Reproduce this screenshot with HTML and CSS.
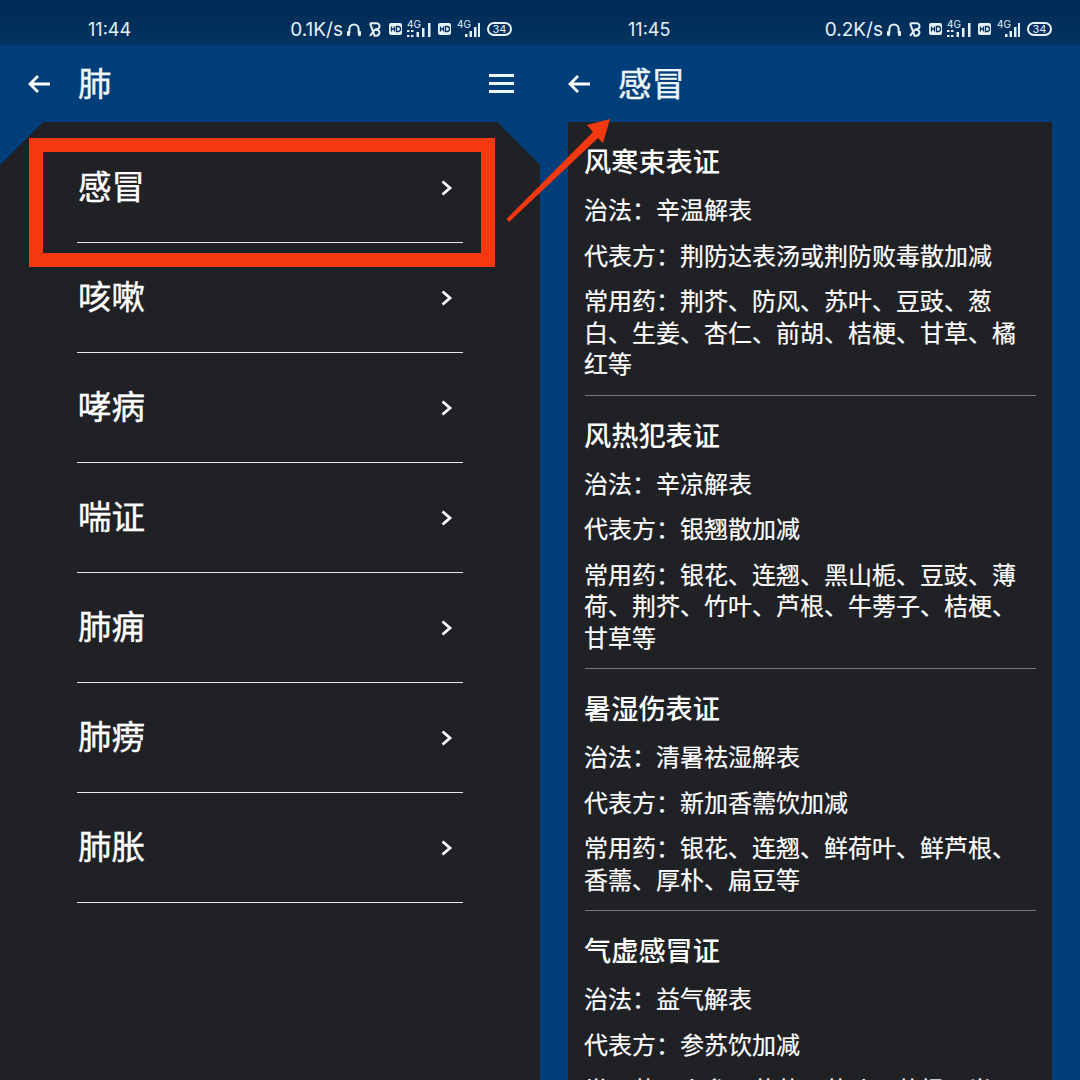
FILE: index.html
```html
<!DOCTYPE html>
<html lang="zh">
<head>
  <meta charset="UTF-8" />
  <title>感冒</title>
  <link rel="stylesheet" href="styles.css">
</head>
<body>
  <svg width="0" height="0" class="defs">
    <symbol id="headphone" viewBox="0 0 14 14">
      <path d="M2.400 11V7a4.600 4.600 0 0 1 9.200 0v4" fill="none" stroke="currentColor" stroke-width="2"/>
      <rect x="0" y="9" width="3" height="5" rx="1" fill="currentColor"/>
      <rect x="11" y="9" width="3" height="5" rx="1" fill="currentColor"/>
    </symbol>
    <symbol id="bluetooth" viewBox="0 0 12 15">
      <path d="M1 1.200h6.500a3 3 0 0 1 1.500 5.600L6 7.500l3.200.800a3 3 0 0 1-1.700 5.400H5.500L1 1.200M1 13.800l5-6.300" fill="none" stroke="currentColor" stroke-width="2"/>
    </symbol>
    <symbol id="hd" viewBox="0 0 13 12">
      <rect width="13" height="12" rx="2" fill="currentColor"/>
      <path d="M2.500 3.500v5M5.500 3.500v5M2.500 6h3M7.500 3.500v5h1.500a2.500 2.500 0 0 0 0-5z" fill="none" stroke="#02305f" stroke-width="1.300"/>
    </symbol>
    <symbol id="signal-a" viewBox="0 0 25 16">
      <rect x="0" y="7" width="2.500" height="2" fill="currentColor"/>
      <rect x="4" y="7" width="2.500" height="2" fill="currentColor"/>
      <rect x="0" y="12" width="2.500" height="2" fill="currentColor"/>
      <rect x="4" y="12" width="2.500" height="2" fill="currentColor"/>
      <rect x="9.500" y="9" width="2.500" height="5" fill="currentColor"/>
      <rect x="15" y="5" width="2.500" height="9" fill="currentColor"/>
      <rect x="21" y="0" width="2.500" height="14" fill="currentColor"/>
    </symbol>
    <symbol id="signal-b" viewBox="0 0 25 16">
      <rect x="10" y="11" width="2.500" height="3" fill="currentColor"/>
      <rect x="14.500" y="8" width="2.500" height="6" fill="currentColor"/>
      <rect x="19" y="4" width="2.500" height="10" fill="currentColor"/>
      <rect x="23" y="0" width="2" height="14" fill="currentColor"/>
    </symbol>
    <symbol id="chevron" viewBox="0 0 12 16">
      <path d="M1.500 1.500l7.500 6.500-7.500 6.500" fill="none" stroke="currentColor" stroke-width="2.800"/>
    </symbol>
    <symbol id="back" viewBox="0 0 24 20">
      <path d="M23 10H3M11 2l-8 8 8 8" fill="none" stroke="currentColor" stroke-width="2.800"/>
    </symbol>
  </svg>

  <div class="phones">
    <section class="phone">
      <div class="statusbar">
        <span class="clock">11:44</span>
        <div class="status-right">
          <span class="speed">0.1K/s</span>
          <svg class="ic-head"><use href="#headphone"/></svg>
          <svg class="ic-bt"><use href="#bluetooth"/></svg>
          <svg class="ic-hd"><use href="#hd"/></svg>
          <div class="net"><span class="net-label">4G</span><svg class="ic-signal"><use href="#signal-a"/></svg></div>
          <svg class="ic-hd ic-hd-b"><use href="#hd"/></svg>
          <div class="net net-b"><span class="net-label">4G</span><svg class="ic-signal"><use href="#signal-b"/></svg></div>
          <span class="battery">34</span>
        </div>
      </div>
      <header class="appbar">
        <svg class="ic-back"><use href="#back"/></svg>
        <div class="title">肺</div>
        <div class="hamburger"><span></span><span></span><span></span></div>
      </header>
      <div class="list-card">
        <a class="item"><span class="item-name">感冒</span><svg class="ic-chevron"><use href="#chevron"/></svg></a>
        <a class="item"><span class="item-name">咳嗽</span><svg class="ic-chevron"><use href="#chevron"/></svg></a>
        <a class="item"><span class="item-name">哮病</span><svg class="ic-chevron"><use href="#chevron"/></svg></a>
        <a class="item"><span class="item-name">喘证</span><svg class="ic-chevron"><use href="#chevron"/></svg></a>
        <a class="item"><span class="item-name">肺痈</span><svg class="ic-chevron"><use href="#chevron"/></svg></a>
        <a class="item"><span class="item-name">肺痨</span><svg class="ic-chevron"><use href="#chevron"/></svg></a>
        <a class="item"><span class="item-name">肺胀</span><svg class="ic-chevron"><use href="#chevron"/></svg></a>
      </div>
    </section>

    <section class="phone">
      <div class="statusbar">
        <span class="clock">11:45</span>
        <div class="status-right">
          <span class="speed">0.2K/s</span>
          <svg class="ic-head"><use href="#headphone"/></svg>
          <svg class="ic-bt"><use href="#bluetooth"/></svg>
          <svg class="ic-hd"><use href="#hd"/></svg>
          <div class="net"><span class="net-label">4G</span><svg class="ic-signal"><use href="#signal-a"/></svg></div>
          <svg class="ic-hd ic-hd-b"><use href="#hd"/></svg>
          <div class="net net-b"><span class="net-label">4G</span><svg class="ic-signal"><use href="#signal-b"/></svg></div>
          <span class="battery">34</span>
        </div>
      </div>
      <header class="appbar">
        <svg class="ic-back"><use href="#back"/></svg>
        <div class="title">感冒</div>
      </header>
      <div class="detail-card">
        <article class="syndrome">
          <h3>风寒束表证</h3>
          <p>治法&#xFF1A;辛温解表</p>
          <p>代表方&#xFF1A;荆防达表汤或荆防败毒散加减</p>
          <p>常用药&#xFF1A;荆芥、防风、苏叶、豆豉、葱白、生姜、杏仁、前胡、桔梗、甘草、橘红等</p>
        </article>
        <article class="syndrome">
          <h3>风热犯表证</h3>
          <p>治法&#xFF1A;辛凉解表</p>
          <p>代表方&#xFF1A;银翘散加减</p>
          <p>常用药&#xFF1A;银花、连翘、黑山栀、豆豉、薄荷、荆芥、竹叶、芦根、牛蒡子、桔梗、甘草等</p>
        </article>
        <article class="syndrome">
          <h3>暑湿伤表证</h3>
          <p>治法&#xFF1A;清暑祛湿解表</p>
          <p>代表方&#xFF1A;新加香薷饮加减</p>
          <p>常用药&#xFF1A;银花、连翘、鲜荷叶、鲜芦根、香薷、厚朴、扁豆等</p>
        </article>
        <article class="syndrome">
          <h3>气虚感冒证</h3>
          <p>治法&#xFF1A;益气解表</p>
          <p>代表方&#xFF1A;参苏饮加减</p>
          <p>常用药&#xFF1A;人参、茯苓、苏叶、葛根、半夏、前胡、陈皮、甘草等</p>
        </article>
      </div>
    </section>
  </div>

  <!-- red annotation drawn over the screenshots -->
  <div class="highlight"></div>
  <svg class="arrow" width="110" height="110" viewBox="0 0 110 110">
    <polygon points="104,2 81,8 87,15 0.500,102 3,105 92,21 97,26" fill="#f4380f"/>
  </svg>
</body>
</html>
```

FILE: styles.css
```css
:root {
  --blue: #003e7a;
  --status: #02305f;
  --dark: #202125;
  --text: #ffffff;
  --red: #f4380f;
}

html, body {
  margin: 0;
  height: 1080px;
  overflow: hidden;
}

body {
  position: relative;
  width: 1080px;
  background: var(--blue);
  color: var(--text);
  font-family: "Noto Sans CJK SC", "Noto Sans", sans-serif;
}

.defs {
  position: absolute;
}

.phones {
  display: flex;
  height: 1080px;
}

.phone {
  width: 540px;
  height: 1080px;
  overflow: hidden;
  display: flex;
  flex-direction: column;
}

/* status bar */
.statusbar {
  flex: none;
  height: 45px;
  box-sizing: border-box;
  padding: 13px 28px 0 88px;
  display: flex;
  justify-content: space-between;
  align-items: center;
  background: linear-gradient(180deg, #012a56, #02335f);
  color: #e6f1f8;
  font-family: Inter, Roboto, sans-serif;
}

.clock {
  font-size: 18px;
}

.status-right {
  display: flex;
  align-items: center;
}

.speed {
  font-size: 19px;
  margin-right: 4px;
}

.ic-head {
  width: 14px;
  height: 14px;
  margin-right: 8px;
}

.ic-bt {
  width: 12px;
  height: 15px;
  margin-right: 8px;
}

.ic-hd {
  width: 13px;
  height: 12px;
  margin-right: 5px;
}

.ic-hd-b {
  margin-right: 4px;
}

.net {
  position: relative;
  width: 25px;
  height: 18px;
  margin-right: 6px;
}

.net-b {
  margin-right: 7px;
}

.net-label {
  position: absolute;
  left: 0;
  top: -1px;
  font-size: 10px;
  line-height: 10px;
}

.net-b .net-label {
  left: 2px;
}

.ic-signal {
  position: absolute;
  left: 0;
  top: 3px;
  width: 25px;
  height: 16px;
}

.battery {
  width: 25px;
  height: 14px;
  box-sizing: border-box;
  border: 2px solid currentColor;
  border-radius: 7px;
  font-size: 11px;
  line-height: 10px;
  text-align: center;
}

/* app bar */
.appbar {
  flex: none;
  height: 77px;
  box-sizing: border-box;
  padding: 0 26px 0 27px;
  display: flex;
  align-items: center;
  background: var(--blue);
}

.ic-back {
  width: 24px;
  height: 20px;
  margin-right: 27px;
}

.title {
  flex: 1;
  margin-bottom: 4px;
  font-size: 33.500px;
  -webkit-text-stroke: 0.4px;
  color: #eef8fb;
}

.hamburger {
  display: flex;
  flex-direction: column;
  gap: 5px;
}

.hamburger span {
  display: block;
  width: 25px;
  height: 3px;
  background: #eef8fb;
}

/* disease list */
.list-card {
  flex: 1;
  padding-top: 11px;
  background: var(--dark);
  clip-path: polygon(43px 0, 497px 0, 540px 43px, 540px 100%, 0 100%, 0 43px);
}

.item {
  display: flex;
  justify-content: space-between;
  align-items: center;
  box-sizing: border-box;
  width: 386px;
  height: 110px;
  margin-left: 77px;
  padding-left: 1px;
  padding-right: 9px;
  border-bottom: 1px solid #e8e8e8;
}

.item-name {
  margin-bottom: 6px;
  font-size: 33.500px;
  -webkit-text-stroke: 0.4px;
}

.ic-chevron {
  width: 12px;
  height: 16px;
  margin-right: 1px;
}

/* syndrome details */
.detail-card {
  flex: 1;
  margin: 0 28px;
  padding: 0 16px 0 17px;
  background: var(--dark);
}

.syndrome {
  padding: 21px 0 16px;
  border-bottom: 1px solid #77797c;
}

.syndrome h3 {
  margin: 0 0 16px -1px;
  font-size: 27.200px;
  font-weight: 500;
  line-height: 34px;
}

.syndrome p {
  margin: 14px 0 0 -1px;
  font-size: 24px;
  line-height: 31.5px;
  -webkit-text-stroke: 0.2px;
}

/* annotation */
.highlight {
  position: absolute;
  left: 29px;
  top: 138px;
  width: 466px;
  height: 129px;
  box-sizing: border-box;
  border: 14px solid var(--red);
}

.arrow {
  position: absolute;
  left: 506px;
  top: 117px;
}
```
